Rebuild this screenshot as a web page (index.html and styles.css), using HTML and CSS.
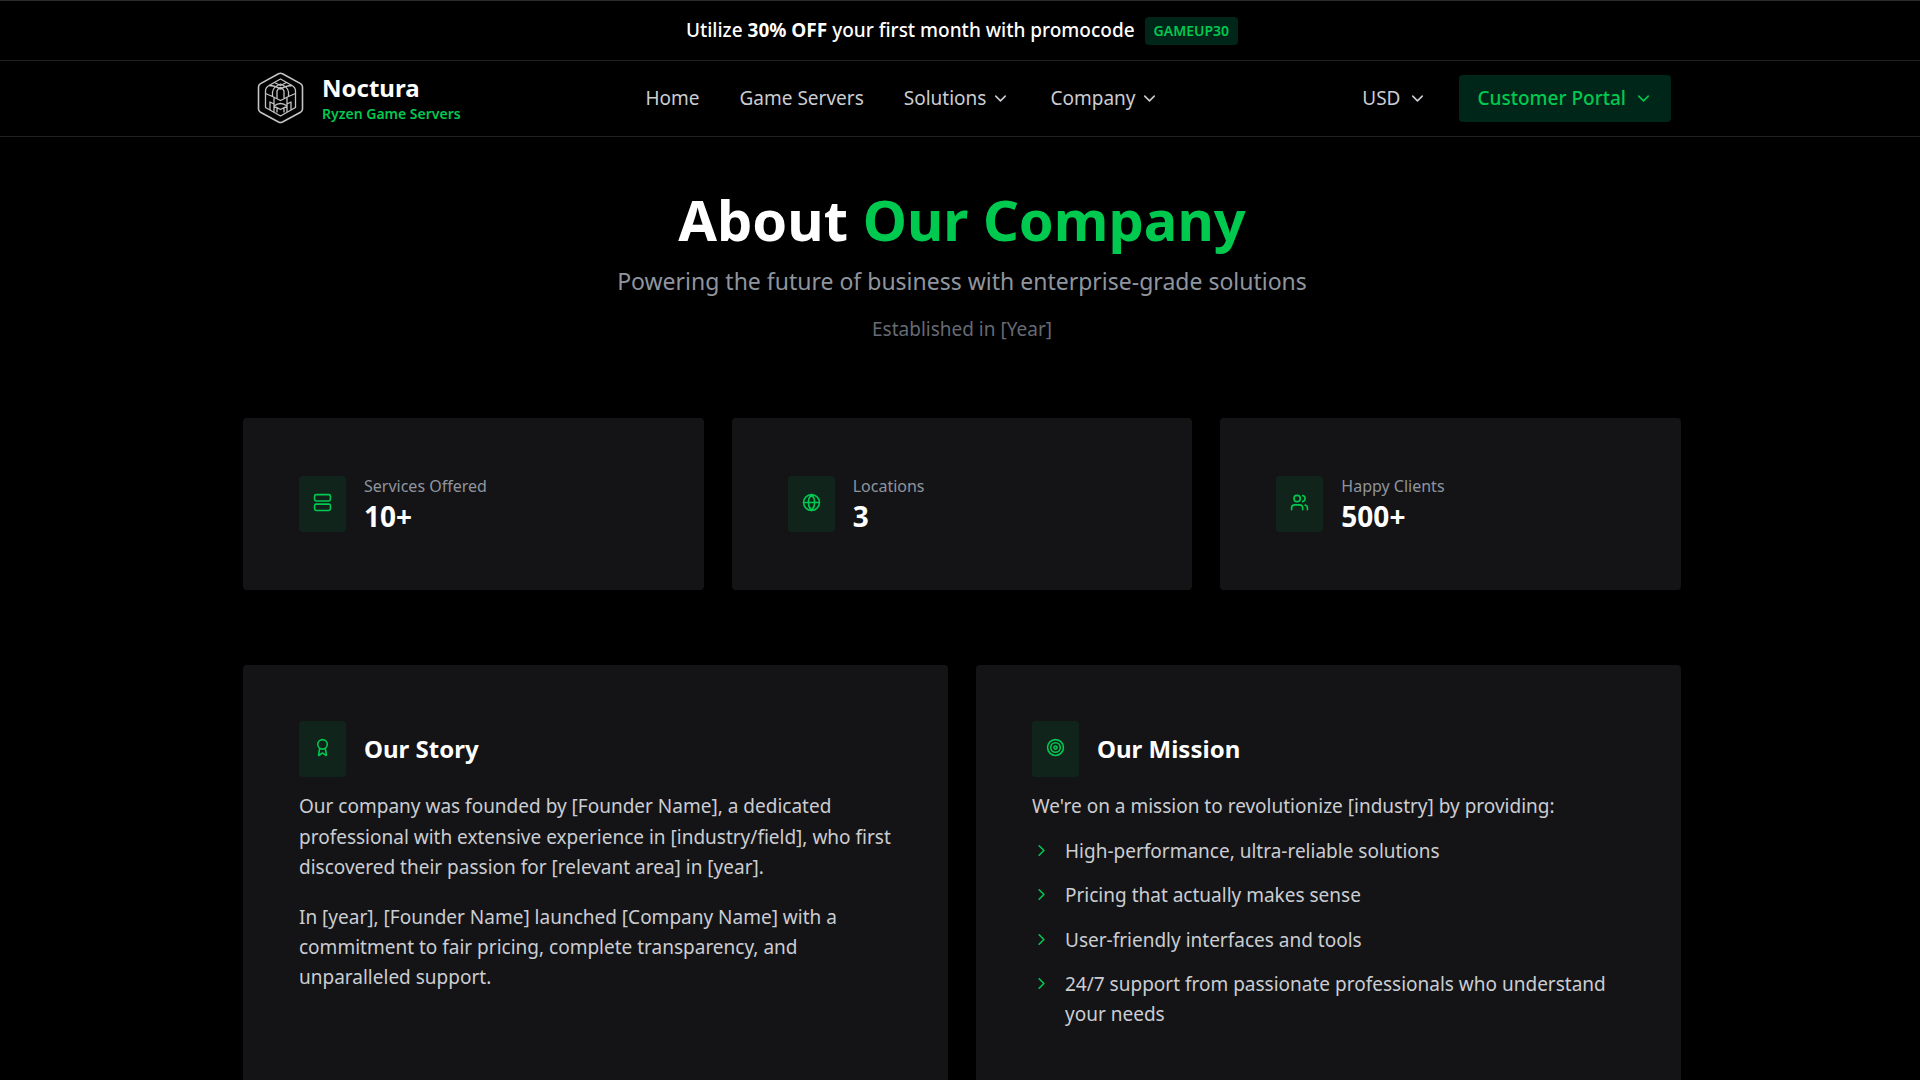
FILE: index.html
```html
<!DOCTYPE html>
<html lang="en">
<head>
  <meta charset="UTF-8">
  <meta name="viewport" content="width=device-width, initial-scale=1.0">
  <title>About - Noctura</title>
  <link rel="stylesheet" href="styles.css">
</head>
<body>
  <svg class="sprite" aria-hidden="true">
    <symbol id="chevron-down" viewBox="0 0 24 24"><path d="m6 9 6 6 6-6"/></symbol>
    <symbol id="chevron-right" viewBox="0 0 24 24"><path d="m9 18 6-6-6-6"/></symbol>
  </svg>

  <div class="promo">
    <p>Utilize <strong>30% OFF</strong> your first month with promocode</p>
    <span class="promo-code">GAMEUP30</span>
  </div>

  <header class="header">
    <div class="container header-inner">
      <a class="brand" href="#">
        <svg class="logo" viewBox="0 1 57 57" aria-hidden="true">
          <path class="logo-frame" d="M25.5 4.8Q27.5 3.6 29.5 4.8L47.5 14.6Q49.5 15.8 49.5 18V40Q49.5 42 47.5 43.2L29.5 53Q27.5 54 25.5 53L7.5 43.2Q5.5 42 5.5 40V18Q5.5 15.8 7.5 14.6Z"/>
          <path d="M27.5 10 16 16.5Q12.5 18.5 12.5 22V38.5L27.5 47 42.5 38.5V22Q42.5 18.5 39 16.5Z"/>
          <path d="M12.5 24.5 19.5 27.5V23Q20 18 27.500 15Q35 18 35.500 23V27.500L42.500 24.500M19.500 27.500 27.500 31.500 35.500 27.500"/>
          <path d="M16 16.500Q22 16.500 27.500 20Q33 16.500 39 16.500M21.500 13.500 27.500 16.500 33.500 13.500M24 29.500V22Q24.500 20 27.500 18.500Q30.500 20 31 22V29.500"/>
          <path d="M17 41V33L21 35V43M38 41V33L34 35V43M21 37 27.500 40.500 34 37M21 37Q27.500 32 34 37M21 28.500V35M34 28.500V35M24 43.500V39M31 43.500V39"/>
        </svg>
        <span class="brand-text">
          <span class="brand-name">Noctura</span>
          <span class="brand-tag">Ryzen Game Servers</span>
        </span>
      </a>

      <nav class="nav">
        <a href="#">Home</a>
        <a href="#">Game Servers</a>
        <button type="button">Solutions <svg class="icon"><use href="#chevron-down"/></svg></button>
        <button type="button">Company <svg class="icon"><use href="#chevron-down"/></svg></button>
      </nav>

      <div class="actions">
        <button type="button" class="btn">USD <svg class="icon"><use href="#chevron-down"/></svg></button>
        <button type="button" class="btn btn-portal">Customer Portal <svg class="icon"><use href="#chevron-down"/></svg></button>
      </div>
    </div>
  </header>

  <main class="main">
    <div class="container">
      <section class="hero">
        <h1>About <span>Our Company</span></h1>
        <p class="subtitle">Powering the future of business with enterprise-grade solutions</p>
        <p class="established">Established in [Year]</p>
      </section>

      <section class="stats">
        <div class="card stat">
          <div class="icon-box">
            <svg class="icon" viewBox="0 0 24 24"><rect x="2" y="2" width="20" height="8" rx="2"/><rect x="2" y="14" width="20" height="8" rx="2"/></svg>
          </div>
          <div>
            <p class="stat-label">Services Offered</p>
            <p class="stat-value">10+</p>
          </div>
        </div>
        <div class="card stat">
          <div class="icon-box">
            <svg class="icon" viewBox="0 0 24 24"><circle cx="12" cy="12" r="10"/><path d="M12 2a14.5 14.5 0 0 0 0 20 14.5 14.5 0 0 0 0-20M2 12h20"/></svg>
          </div>
          <div>
            <p class="stat-label">Locations</p>
            <p class="stat-value">3</p>
          </div>
        </div>
        <div class="card stat">
          <div class="icon-box">
            <svg class="icon" viewBox="0 0 24 24"><path d="M16 21v-2a4 4 0 0 0-4-4H6a4 4 0 0 0-4 4v2"/><circle cx="9" cy="7" r="4"/><path d="M22 21v-2a4 4 0 0 0-3-3.87M16 3.13a4 4 0 0 1 0 7.75"/></svg>
          </div>
          <div>
            <p class="stat-label">Happy Clients</p>
            <p class="stat-value">500+</p>
          </div>
        </div>
      </section>

      <section class="about">
        <article class="card">
          <div class="card-head">
            <div class="icon-box">
              <svg class="icon" viewBox="0 0 24 24"><path d="m15.477 12.89 1.515 8.526a.5.5 0 0 1-.81.47l-3.58-2.687a1 1 0 0 0-1.197 0l-3.586 2.686a.5.5 0 0 1-.81-.469l1.514-8.526"/><circle cx="12" cy="8" r="6"/></svg>
            </div>
            <h2>Our Story</h2>
          </div>
          <p>Our company was founded by [Founder Name], a dedicated professional with extensive experience in [industry/field], who first discovered their passion for [relevant area] in [year].</p>
          <p>In [year], [Founder Name] launched [Company Name] with a commitment to fair pricing, complete transparency, and unparalleled support.</p>
        </article>

        <article class="card">
          <div class="card-head">
            <div class="icon-box">
              <svg class="icon" viewBox="0 0 24 24"><circle cx="12" cy="12" r="10"/><circle cx="12" cy="12" r="6"/><circle cx="12" cy="12" r="2"/></svg>
            </div>
            <h2>Our Mission</h2>
          </div>
          <p>We're on a mission to revolutionize [industry] by providing:</p>
          <ul class="mission-list">
            <li><svg class="icon"><use href="#chevron-right"/></svg><span>High-performance, ultra-reliable solutions</span></li>
            <li><svg class="icon"><use href="#chevron-right"/></svg><span>Pricing that actually makes sense</span></li>
            <li><svg class="icon"><use href="#chevron-right"/></svg><span>User-friendly interfaces and tools</span></li>
            <li><svg class="icon"><use href="#chevron-right"/></svg><span>24/7 support from passionate professionals who understand your needs</span></li>
          </ul>
        </article>
      </section>
    </div>
  </main>
</body>
</html>
```
FILE: styles.css
```css
:root {
  --green: #00c950;
  --green-dark: #002619;
  --card: #141416;
  --line: #202022;
  --text: #cbcdd2;
}

* {
  box-sizing: border-box;
  margin: 0;
  padding: 0;
}

body {
  background-color: #000;
  color: var(--text);
  font-family: "Noto Sans", sans-serif;
  font-size: 19px;
  line-height: 1.6;
  overflow-x: hidden;
}

a {
  color: inherit;
  text-decoration: none;
}

button {
  display: flex;
  align-items: center;
  background: none;
  border: none;
  color: inherit;
  font: inherit;
  cursor: pointer;
}

.sprite {
  display: none;
}

.icon {
  width: 19px;
  height: 19px;
  flex-shrink: 0;
  fill: none;
  stroke: currentColor;
  stroke-width: 2;
  stroke-linecap: round;
  stroke-linejoin: round;
}

.container {
  max-width: 1438px;
  margin: 0 auto;
}

.promo,
.header,
.main {
  padding-left: 4px;
}

/* promo bar */
.promo {
  display: flex;
  justify-content: center;
  align-items: center;
  gap: 10px;
  height: 60px;
  padding-top: 1px;
  border-top: 1px solid #2c2c2e;
  color: #fff;
  font-weight: 500;
}

.promo p {
  padding-bottom: 2px;
}

.promo-code {
  padding: 3px 9px;
  border-radius: 4px;
  background-color: var(--green-dark);
  color: var(--green);
  font-size: 14px;
  font-weight: 600;
}

/* header */
.header {
  border-top: 1px solid var(--line);
  border-bottom: 1px solid var(--line);
}

.header-inner {
  display: flex;
  justify-content: space-between;
  align-items: center;
  height: 75px;
  padding: 0 10px;
}

.brand {
  display: flex;
  align-items: center;
  gap: 12px;
}

.logo {
  width: 57px;
  height: 57px;
  fill: none;
  stroke: #c4c4c4;
  stroke-width: 1.3;
  stroke-linejoin: round;
}

.logo-frame {
  stroke-width: 1.6;
}

.brand-text {
  display: flex;
  flex-direction: column;
  gap: 2px;
}

.brand-name {
  color: #fff;
  font-size: 24px;
  font-weight: 700;
  line-height: 28px;
}

.brand-tag {
  color: var(--green);
  font-size: 14px;
  font-weight: 600;
  line-height: 20px;
}

.nav {
  display: flex;
  gap: 40px;
}

.nav button {
  gap: 5px;
}

.actions {
  display: flex;
  gap: 14px;
}

.btn {
  gap: 8px;
  padding: 8px 18px;
  border-radius: 4px;
}

.btn-portal {
  background-color: var(--green-dark);
  color: var(--green);
  font-weight: 500;
}

/* hero */
.hero {
  padding: 52px 0 74px;
  text-align: center;
}

.hero h1 {
  color: #fff;
  font-size: 56px;
  font-weight: 700;
  line-height: 60px;
}

.hero h1 span {
  color: var(--green);
}

.subtitle {
  margin-top: 15px;
  color: #8f959f;
  font-size: 23px;
  line-height: 34px;
}

.established {
  margin-top: 16px;
  color: #666a74;
}

/* cards */
.card {
  padding: 56px;
  border-radius: 4px;
  background-color: var(--card);
}

.icon-box {
  display: flex;
  justify-content: center;
  width: 47px;
  height: 56px;
  padding-top: 17px;
  border-radius: 4px;
  background-color: #11241c;
  color: var(--green);
}

.stats {
  display: grid;
  grid-template-columns: repeat(3, 1fr);
  gap: 28px;
}

.stat {
  display: flex;
  align-items: center;
  gap: 18px;
}

.stat-label {
  color: #8f959f;
  font-size: 16px;
  line-height: 24px;
}

.stat-value {
  color: #fff;
  font-size: 28px;
  font-weight: 700;
  line-height: 36px;
}

.about {
  display: grid;
  grid-template-columns: repeat(2, 1fr);
  gap: 28px;
  margin-top: 75px;
}

.card-head {
  display: flex;
  align-items: center;
  gap: 18px;
  margin-bottom: 14px;
}

.card-head h2 {
  color: #fff;
  font-size: 24px;
  font-weight: 700;
}

.about p + p {
  margin-top: 19px;
}

.mission-list {
  display: flex;
  flex-direction: column;
  gap: 14px;
  margin-top: 14px;
  list-style: none;
}

.mission-list li {
  display: flex;
  gap: 14px;
}

.mission-list .icon {
  margin-top: 5px;
  color: var(--green);
}
```
